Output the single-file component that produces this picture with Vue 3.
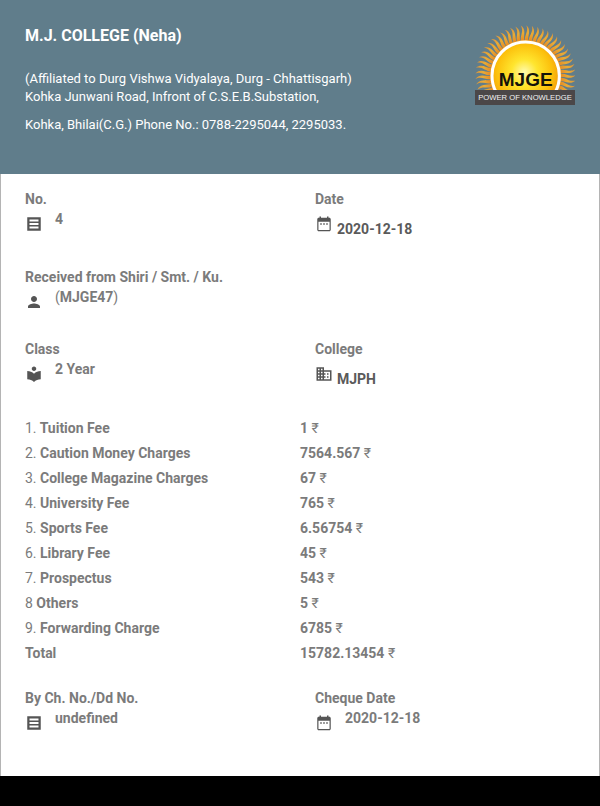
<script setup>
const toRad = (deg) => (deg * Math.PI) / 180
const point = (r, deg) =>
  `${(182 + r * Math.cos(toRad(deg))).toFixed(1)} ${(182 + r * Math.sin(toRad(deg))).toFixed(1)}`

// Curved flames around the upper part of the sun
const rays = Array.from({ length: 38 }, (_, i) => {
  const a = -208 + i * 6.3
  return `M${point(104, a - 2.5)} C${point(118, a - 5)} ${point(132, a + 3)} ${point(151, a - 1)} C${point(138, a + 6)} ${point(122, a + 1)} ${point(104, a + 2.5)}Z`
})

const icons = {
  list: 'M3 3v18h18V3H3zm15 15H6v-2.700h12V18zm0-4.650H6v-2.700h12v2.700zm0-4.650H6V6h12v2.700z',
  date: 'M9 11H7v2h2v-2zm4 0h-2v2h2v-2zm4 0h-2v2h2v-2zm2-7.500h-1V2h-2v1.500H8V2H6v1.500H5c-1.110 0-2 .9-2 2v14c0 1.100.890 2 2 2h14c1.100 0 2-.9 2-2v-14c0-1.100-.9-2-2-2zm.4 16.500H4.600V9h14.800v11z',
  person: 'M12 12c2.210 0 4-1.790 4-4s-1.790-4-4-4-4 1.790-4 4 1.790 4 4 4zm0 2c-2.670 0-8 1.340-8 4v2h16v-2c0-2.660-5.330-4-8-4z',
  library: 'M12 11.550C9.640 9.350 6.480 8 3 8v11c3.480 0 6.640 1.350 9 3.550 2.360-2.190 5.520-3.550 9-3.550V8c-3.480 0-6.640 1.350-9 3.550zM12 8c1.660 0 3-1.340 3-3s-1.340-3-3-3-3 1.340-3 3 1.340 3 3 3z',
  business: 'M12 7V3H2v18h20V7H12zM6 19H4v-2h2v2zm0-4H4v-2h2v2zm0-4H4V9h2v2zm0-4H4V5h2v2zm4 12H8v-2h2v2zm0-4H8v-2h2v2zm0-4H8V9h2v2zm0-4H8V5h2v2zm10 12h-8v-2h2v-2h-2v-2h2v-2h-2V9h8v10zm-2-8h-2v2h2v-2zm0 4h-2v2h2v-2z',
}

const details = [
  { label: 'No.', icon: 'list', value: '4' },
  { label: 'Date', icon: 'date', value: '2020-12-18', inline: true },
  { label: 'Received from Shiri / Smt. / Ku.', icon: 'person', value: 'MJGE47', wide: true },
  { label: 'Class', icon: 'library', value: '2 Year' },
  { label: 'College', icon: 'business', value: 'MJPH', inline: true },
]

const fees = [
  { no: '1.', name: 'Tuition Fee', amount: '1' },
  { no: '2.', name: 'Caution Money Charges', amount: '7564.567' },
  { no: '3.', name: 'College Magazine Charges', amount: '67' },
  { no: '4.', name: 'University Fee', amount: '765' },
  { no: '5.', name: 'Sports Fee', amount: '6.56754' },
  { no: '6.', name: 'Library Fee', amount: '45' },
  { no: '7.', name: 'Prospectus', amount: '543' },
  { no: '8', name: 'Others', amount: '5' },
  { no: '9.', name: 'Forwarding Charge', amount: '6785' },
  { no: '', name: 'Total', amount: '15782.13454' },
]

const payment = [
  { label: 'By Ch. No./Dd No.', icon: 'list', value: 'undefined' },
  { label: 'Cheque Date', icon: 'date', value: '2020-12-18' },
]
</script>

<template>
  <div class="page">
    <main class="receipt">
      <header class="banner">
        <div>
          <h1>M.J. COLLEGE (Neha)</h1>
          <p>(Affiliated to Durg Vishwa Vidyalaya, Durg - Chhattisgarh)<br />Kohka Junwani Road, Infront of C.S.E.B.Substation,</p>
          <p>Kohka, Bhilai(C.G.) Phone No.: 0788-2295044, 2295033.</p>
        </div>
        <svg class="logo" viewBox="30 33 300 240" role="img" aria-label="MJGE">
          <defs>
            <radialGradient id="sun" cx="0.48" cy="0.45" r="0.55">
              <stop offset="0" stop-color="#fffbb0" />
              <stop offset="0.35" stop-color="#ffe52e" />
              <stop offset="0.75" stop-color="#fcc00c" />
              <stop offset="1" stop-color="#f39a0b" />
            </radialGradient>
            <radialGradient id="flame" gradientUnits="userSpaceOnUse" cx="182" cy="182" r="150">
              <stop offset="0.7" stop-color="#e58a25" />
              <stop offset="0.85" stop-color="#e9ab35" />
              <stop offset="1" stop-color="#d9963c" />
            </radialGradient>
            <clipPath id="horizon"><rect x="30" y="30" width="300" height="196" /></clipPath>
          </defs>
          <g clip-path="url(#horizon)">
            <path v-for="d in rays" :key="d" :d="d" fill="url(#flame)" />
            <circle cx="182" cy="182" r="107" fill="#f3a321" />
            <circle cx="182" cy="182" r="101" fill="url(#sun)" stroke="#fff" stroke-width="9" />
          </g>
          <rect x="30" y="225" width="300" height="45" fill="#4b4748" />
          <text class="logo-name" x="182" y="213">MJGE</text>
          <text class="logo-motto" x="180" y="256">POWER OF KNOWLEDGE</text>
        </svg>
      </header>

      <dl class="fields details">
        <div v-for="f in details" :key="f.label" class="field" :class="{ wide: f.wide }">
          <dt>{{ f.label }}</dt>
          <dd :class="{ inline: f.inline }">
            <svg class="icon" viewBox="0 0 24 24" aria-hidden="true"><path :d="icons[f.icon]" fill-rule="evenodd" /></svg>
            <span v-if="f.wide" class="value"><span class="light">(</span>{{ f.value }}<span class="light">)</span></span>
            <span v-else class="value">{{ f.value }}</span>
          </dd>
        </div>
      </dl>

      <table class="fees">
        <tbody>
          <tr v-for="f in fees" :key="f.name">
            <th scope="row"><span v-if="f.no" class="light">{{ f.no }}</span> {{ f.name }}</th>
            <td>{{ f.amount }} <span class="light">₹</span></td>
          </tr>
        </tbody>
      </table>

      <dl class="fields">
        <div v-for="f in payment" :key="f.label" class="field">
          <dt>{{ f.label }}</dt>
          <dd>
            <svg class="icon" viewBox="0 0 24 24" aria-hidden="true"><path :d="icons[f.icon]" fill-rule="evenodd" /></svg>
            <span class="value">{{ f.value }}</span>
          </dd>
        </div>
      </dl>
    </main>
  </div>
</template>

<style>
body {
  margin: 0;
  background: #000;
}
</style>

<style scoped>
.page {
  padding-bottom: 30px;
  background: #000;
  font-family: Roboto, "Noto Sans", sans-serif;
  font-size: 14px;
  font-weight: 700;
  line-height: 20px;
  color: #7b7b7b;
}
.receipt {
  background: #fff;
  border: 1px solid #b4b4b4;
  border-width: 0 1px;
  padding-bottom: 44px;
}
.banner {
  display: flex;
  justify-content: space-between;
  align-items: flex-start;
  margin: 0 -1px;
  padding: 26px 25px 40px;
  background: #607d8b;
  color: #fff;
}
h1 {
  margin: 0 0 24px;
  font-size: 16px;
  line-height: 20px;
}
.banner p {
  margin: 0 0 10px;
  font-size: 13px;
  font-weight: 400;
  line-height: 18px;
}
.banner p:last-child {
  margin: 0;
}
.logo {
  flex: none;
  width: 100px;
  height: 80px;
  overflow: visible;
}
.logo-name {
  font: 700 57px "Liberation Sans", sans-serif;
  text-anchor: middle;
  fill: #15130a;
}
.logo-motto {
  font: 400 23px "Liberation Sans", sans-serif;
  text-anchor: middle;
  fill: #f2f2f2;
}
.fields {
  display: grid;
  grid-template-columns: 1fr 1fr;
  margin: 0;
  padding: 0 24px;
}
.details {
  padding-top: 15px;
  row-gap: 28px;
}
.field:nth-child(even) {
  padding-left: 15px;
}
.wide {
  grid-column: 1 / -1;
}
.details .field:last-child {
  padding-left: 15px;
}
.details .field:nth-child(4) {
  padding-left: 0;
}
dd {
  display: flex;
  gap: 12px;
  margin: 0;
}
dd.inline {
  gap: 4px;
  color: #5a5a5a;
}
.inline .value {
  margin-top: 10px;
}
.icon {
  flex: none;
  width: 18px;
  height: 18px;
  margin-top: 6px;
  fill: #555;
}
.light {
  font-weight: 400;
}
.fees {
  width: calc(100% - 48px);
  margin: 27px 24px 22px;
  border-collapse: collapse;
  table-layout: fixed;
  line-height: 25px;
}
th,
td {
  width: 50%;
  padding: 0;
  text-align: left;
}
</style>
